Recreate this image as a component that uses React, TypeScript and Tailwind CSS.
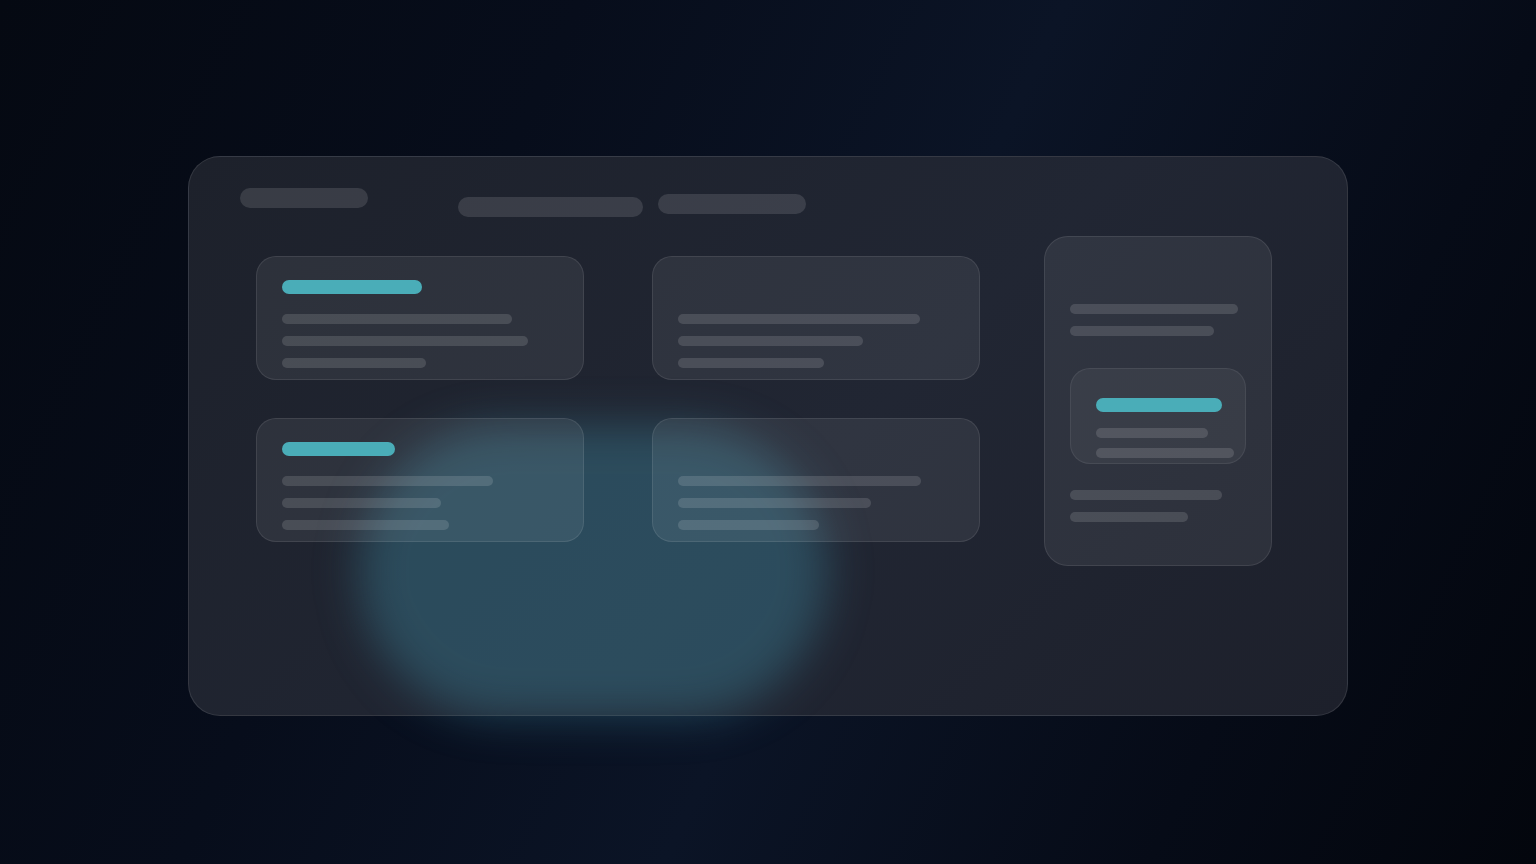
import React from "react";

const Line = ({ w }: { w: string }) => (
  <div className={`h-[10px] rounded-full bg-white/[0.13] ${w}`} />
);

function Card({ teal, lines }: { teal?: string; lines: string[] }) {
  return (
    <div className="h-[124px] w-[328px] rounded-[20px] border border-white/[0.09] bg-white/[0.07] pl-[25px] pt-[23px]">
      <div className={`h-[14px] rounded-full ${teal ? "bg-[#4aadb8] " + teal : "w-0"}`} />
      <div className="mt-[20px] flex flex-col gap-[12px]">
        <Line w={lines[0]} />
        <Line w={lines[1]} />
        <Line w={lines[2]} />
      </div>
    </div>
  );
}

export default function App() {
  return (
    <div className="flex h-screen w-screen items-center justify-center bg-[linear-gradient(115deg,#050912_0%,#070d1b_30%,#0b1426_55%,#060b17_80%,#03060d_100%)]">
      <div className="relative mt-[8px] h-[560px] w-[1160px] rounded-[32px] border border-white/[0.1] bg-[linear-gradient(135deg,#1d212b_0%,#212633_55%,#1d202b_100%)]">
        <div className="absolute left-[170px] top-[268px] h-[292px] w-[468px] rounded-full bg-[#3f8ca3]/[0.38] blur-[22px]" />
        <div className="relative flex flex-col">
          <div className="flex items-start pl-[51px] pt-[31px]">
            <div className="h-[20px] w-[128px] rounded-full bg-white/[0.12]" />
            <div className="ml-[90px] mt-[9px] h-[20px] w-[185px] rounded-full bg-white/[0.12]" />
            <div className="ml-[15px] mt-[6px] h-[20px] w-[148px] rounded-full bg-white/[0.12]" />
          </div>
          <div className="mt-[19px] flex items-start pl-[67px]">
            <div className="mt-[20px] grid grid-cols-[328px_328px] gap-x-[68px] gap-y-[38px]">
              <Card teal="w-[140px]" lines={["w-[230px]", "w-[246px]", "w-[144px]"]} />
              <Card lines={["w-[242px]", "w-[185px]", "w-[146px]"]} />
              <Card teal="w-[113px]" lines={["w-[211px]", "w-[159px]", "w-[167px]"]} />
              <Card lines={["w-[243px]", "w-[193px]", "w-[141px]"]} />
            </div>
            <div className="ml-[64px] h-[330px] w-[228px] rounded-[24px] border border-white/[0.09] bg-white/[0.07] pl-[25px] pt-[67px]">
              <div className="flex flex-col gap-[12px]">
                <Line w="w-[168px]" />
                <Line w="w-[144px]" />
              </div>
              <div className="mt-[32px] h-[96px] w-[176px] rounded-[20px] border border-white/[0.07] bg-white/[0.05] pl-[25px] pt-[29px]">
                <div className="h-[14px] w-[126px] rounded-full bg-[#4aadb8]" />
                <div className="mt-[16px] flex flex-col gap-[10px]">
                  <Line w="w-[112px]" />
                  <Line w="w-[138px]" />
                </div>
              </div>
              <div className="mt-[26px] flex flex-col gap-[12px]">
                <Line w="w-[152px]" />
                <Line w="w-[118px]" />
              </div>
            </div>
          </div>
        </div>
      </div>
    </div>
  );
}
